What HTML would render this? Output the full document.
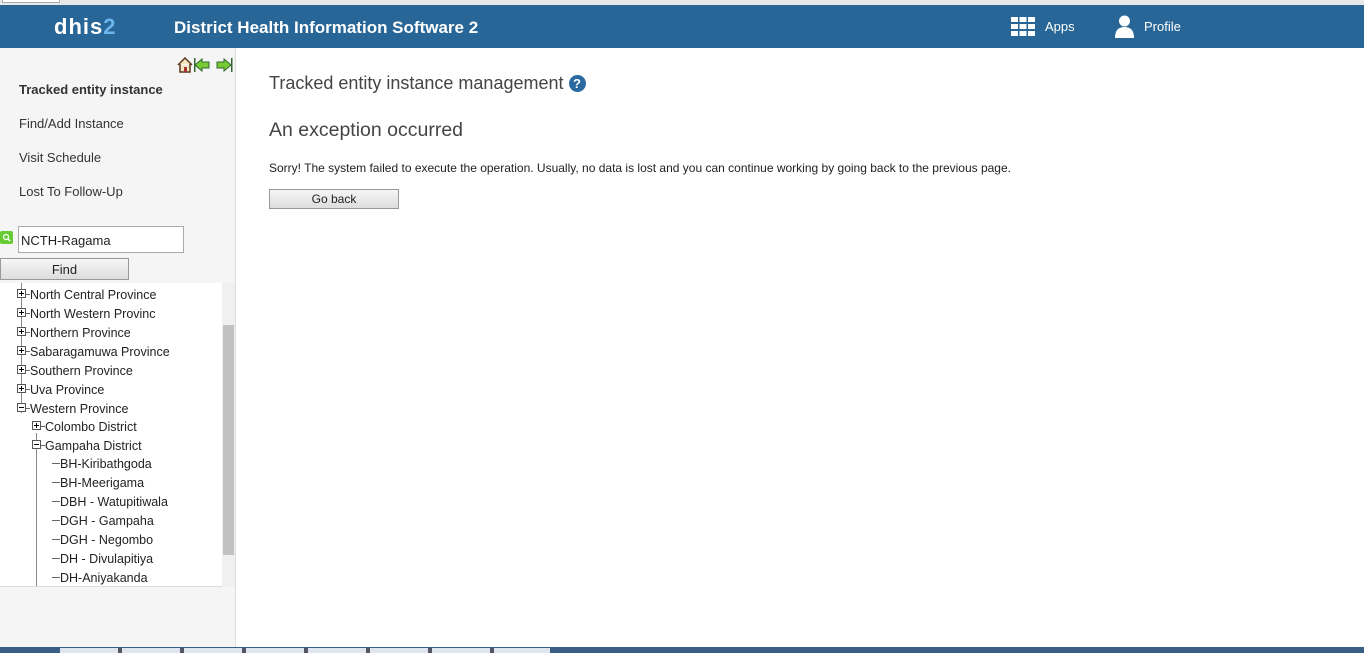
<!DOCTYPE html><html><head><style>
body{margin:0;width:1364px;height:653px;overflow:hidden;font-family:"Liberation Sans",sans-serif;background:#fff;position:relative}
.a{position:absolute}
.t{position:absolute;font-size:12.5px;color:#222;white-space:nowrap}
.pl{display:inline-block;width:7px;height:7px;border:1px solid #555;position:relative;vertical-align:1px;background:#fff}
.pl:before{content:"";position:absolute;left:1px;top:3px;width:5px;height:1px;background:#000}
.pl.p:after{content:"";position:absolute;left:3px;top:1px;width:1px;height:5px;background:#000}
.d{display:inline-block;width:4px;height:1px;background:#666;vertical-align:4px}
</style></head><body>
<div class="a" style="left:0;top:0;width:1364px;height:5px;background:#e8e8e8"></div>
<div class="a" style="left:2px;top:0;width:56px;height:2px;border:1px solid #aaa;border-top:0;background:#fff"></div>
<div class="a" style="left:0;top:5px;width:1364px;height:43px;background:#276696"></div>
<div class="a" style="left:54px;top:14px;font-size:22px;font-weight:bold;color:#fff;letter-spacing:1px">dhis<span style="color:#6cb6f0">2</span></div>
<div class="a" style="left:174px;top:18px;font-size:17px;font-weight:bold;color:#fff">District Health Information Software 2</div>
<svg class="a" style="left:1011px;top:17px" width="24" height="19"><g fill="#fff"><rect x="0" y="0" width="7" height="5"/><rect x="8.5" y="0" width="7" height="5"/><rect x="17" y="0" width="7" height="5"/><rect x="0" y="7" width="7" height="5"/><rect x="8.5" y="7" width="7" height="5"/><rect x="17" y="7" width="7" height="5"/><rect x="0" y="14" width="7" height="5"/><rect x="8.5" y="14" width="7" height="5"/><rect x="17" y="14" width="7" height="5"/></g></svg>
<div class="a" style="left:1045px;top:19px;font-size:13px;color:#fff">Apps</div>
<svg class="a" style="left:1114px;top:15px" width="21" height="23"><circle cx="10.5" cy="6" r="5.5" fill="#fff"/><path d="M1 23 Q1 12 10.5 12 Q20 12 20 23Z" fill="#fff"/></svg>
<div class="a" style="left:1144px;top:19px;font-size:13px;color:#fff">Profile</div>
<div class="a" style="left:0;top:48px;width:235px;height:599px;background:#f5f5f5;border-right:1px solid #ddd"></div>
<svg class="a" style="left:177px;top:57px" width="56" height="16"><path d="M1 8 L8 1 L15 8 M3 7 V15 H13 V7" fill="#f4e6c0" stroke="#5a3b1a" stroke-width="1.5"/><rect x="7" y="10" width="3" height="5" fill="#a33"/><path d="M18 8 L25 2 V5 H32 V11 H25 V14Z" fill="#7c3" stroke="#363" /><rect x="17" y="1" width="1.5" height="14" fill="#363"/><path d="M54 8 L47 2 V5 H40 V11 H47 V14Z" fill="#7c3" stroke="#363"/><rect x="54" y="1" width="1.5" height="14" fill="#363"/></svg>
<div class="a" style="left:19px;top:82px;font-size:13px;font-weight:bold;color:#333">Tracked entity instance</div>
<div class="a" style="left:19px;top:116px;font-size:13px;color:#333">Find/Add Instance</div>
<div class="a" style="left:19px;top:150px;font-size:13px;color:#333">Visit Schedule</div>
<div class="a" style="left:19px;top:184px;font-size:13px;color:#333">Lost To Follow-Up</div>
<svg class="a" style="left:0;top:231px" width="13" height="13"><rect width="13" height="13" rx="2" fill="#6c3"/><circle cx="6" cy="6" r="2.5" fill="none" stroke="#fff" stroke-width="1.2"/><path d="M8 8 L10 10" stroke="#fff" stroke-width="1.5"/></svg>
<div class="a" style="left:18px;top:226px;width:162px;height:25px;border:1px solid #aaa;background:#fff;font-size:13px;line-height:27px;padding-left:2px;color:#222">NCTH-Ragama</div>
<div class="a" style="left:0;top:258px;width:127px;height:20px;border:1px solid #999;background:linear-gradient(#f6f6f6,#ddd);font-size:13px;text-align:center;line-height:21px;color:#222">Find</div>
<div class="a" style="left:0;top:283px;width:222px;height:304px;background:#fff"></div>
<div class="a" style="left:222px;top:283px;width:13px;height:304px;background:#f0f0f0"></div>
<div class="a" style="left:223px;top:325px;width:11px;height:230px;background:#c1c1c1"></div>
<div class="a" style="left:21px;top:283px;width:1px;height:130px;background:#888"></div>
<div class="a" style="left:36px;top:433px;width:1px;height:154px;background:#888"></div>
<div class="t" style="left:17px;top:288px"><span class="pl p"></span><span class="d"></span>North Central Province</div>
<div class="t" style="left:17px;top:307px"><span class="pl p"></span><span class="d"></span>North Western Provinc</div>
<div class="t" style="left:17px;top:326px"><span class="pl p"></span><span class="d"></span>Northern Province</div>
<div class="t" style="left:17px;top:345px"><span class="pl p"></span><span class="d"></span>Sabaragamuwa Province</div>
<div class="t" style="left:17px;top:364px"><span class="pl p"></span><span class="d"></span>Southern Province</div>
<div class="t" style="left:17px;top:383px"><span class="pl p"></span><span class="d"></span>Uva Province</div>
<div class="t" style="left:17px;top:402px"><span class="pl"></span><span class="d"></span>Western Province</div>
<div class="t" style="left:32px;top:420px"><span class="pl p"></span><span class="d"></span>Colombo District</div>
<div class="t" style="left:32px;top:439px"><span class="pl"></span><span class="d"></span>Gampaha District</div>
<div class="t" style="left:52px;top:457px"><span class="d" style="width:8px"></span>BH-Kiribathgoda</div>
<div class="t" style="left:52px;top:476px"><span class="d" style="width:8px"></span>BH-Meerigama</div>
<div class="t" style="left:52px;top:495px"><span class="d" style="width:8px"></span>DBH - Watupitiwala</div>
<div class="t" style="left:52px;top:514px"><span class="d" style="width:8px"></span>DGH - Gampaha</div>
<div class="t" style="left:52px;top:533px"><span class="d" style="width:8px"></span>DGH - Negombo</div>
<div class="t" style="left:52px;top:552px"><span class="d" style="width:8px"></span>DH - Divulapitiya</div>
<div class="t" style="left:52px;top:571px"><span class="d" style="width:8px"></span>DH-Aniyakanda</div>
<div class="a" style="left:0;top:586px;width:222px;height:1px;background:#ddd"></div>
<div class="a" style="left:269px;top:73px;font-size:18px;color:#444">Tracked entity instance management <span style="display:inline-block;width:17px;height:17px;border-radius:50%;background:#2b6aa0;color:#fff;font-size:13px;font-weight:bold;text-align:center;line-height:17px;vertical-align:1px">?</span></div>
<div class="a" style="left:269px;top:119px;font-size:19.5px;color:#444">An exception occurred</div>
<div class="a" style="left:269px;top:161px;font-size:12px;color:#222">Sorry! The system failed to execute the operation. Usually, no data is lost and you can continue working by going back to the previous page.</div>
<div class="a" style="left:269px;top:189px;width:128px;height:18px;border:1px solid #999;background:linear-gradient(#f6f6f6,#ddd);font-size:12px;text-align:center;line-height:19px;color:#222">Go back</div>
<div class="a" style="left:0;top:647px;width:1364px;height:6px;background:#3a5f87"></div>
<div class="a" style="left:60px;top:648px;width:490px;height:5px;background:repeating-linear-gradient(90deg,#dfe6ee 0 58px,#556 58px 62px)"></div>
</body></html>
